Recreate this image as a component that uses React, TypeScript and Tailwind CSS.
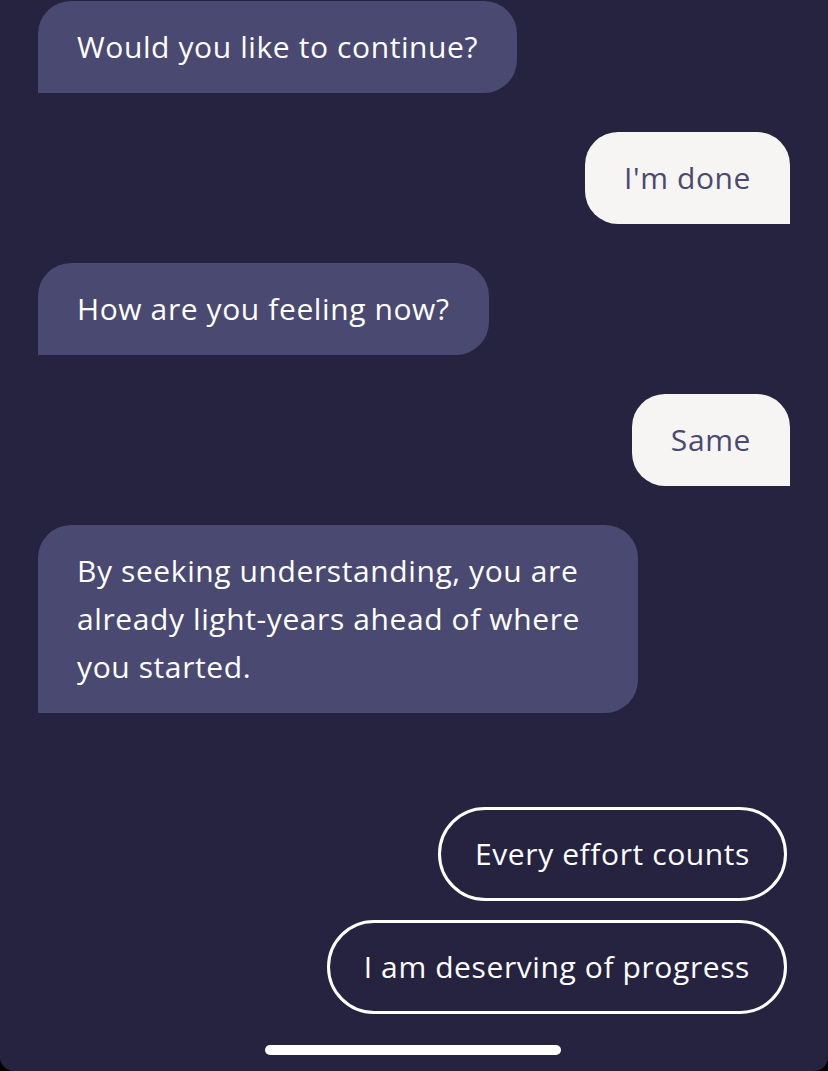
import React from "react";

const font = { fontFamily: "'Open Sans', sans-serif" };

function Bot({ children, wide }: { children: React.ReactNode; wide?: boolean }) {
  return (
    <div className="flex justify-start">
      <div
        className={
          wide
            ? "w-[600px] bg-[#4a4971] text-white text-[30px] tracking-[0.6px] leading-[48px] px-[39px] py-[22px] rounded-t-[33px] rounded-br-[33px] rounded-bl-none whitespace-nowrap"
            : "bg-[#4a4971] text-white text-[30px] tracking-[0.6px] leading-[48px] px-[39px] py-[22px] rounded-t-[33px] rounded-br-[33px] rounded-bl-none whitespace-nowrap"
        }
      >
        {children}
      </div>
    </div>
  );
}

function User({ children }: { children: React.ReactNode }) {
  return (
    <div className="flex justify-end">
      <div className="bg-[#f6f5f3] text-[#4a4971] text-[30px] tracking-[0.6px] leading-[48px] px-[39px] py-[22px] rounded-t-[33px] rounded-bl-[33px] rounded-br-none whitespace-nowrap">
        {children}
      </div>
    </div>
  );
}

function Choice({ children }: { children: React.ReactNode }) {
  return (
    <div className="flex justify-end">
      <button className="border-[3px] border-white rounded-full text-white text-[30px] tracking-[0.6px] leading-[48px] px-[34px] py-[20px] whitespace-nowrap">
        {children}
      </button>
    </div>
  );
}

export default function App() {
  return (
    <div className="bg-black w-[828px] h-[1071px]" style={font}>
      <div className="bg-[#262341] w-full h-full rounded-b-[14px] overflow-hidden flex flex-col pl-[38px] pr-[38px] pt-[1px]">
        <div className="flex flex-col gap-[39px]">
          <Bot>Would you like to continue?</Bot>
          <User>I'm done</User>
          <Bot>How are you feeling now?</Bot>
          <User>Same</User>
          <Bot wide>
            By seeking understanding, you are
            <br />
            already light-years ahead of where
            <br />
            you started.
          </Bot>
        </div>
        <div className="flex flex-col gap-[19px] mt-[94px] pr-[3px]">
          <Choice>Every effort counts</Choice>
          <Choice>I am deserving of progress</Choice>
        </div>
        <div className="flex justify-center mt-[31px] pr-[2px]">
          <div className="w-[296px] h-[10px] rounded-full bg-white" />
        </div>
      </div>
    </div>
  );
}
